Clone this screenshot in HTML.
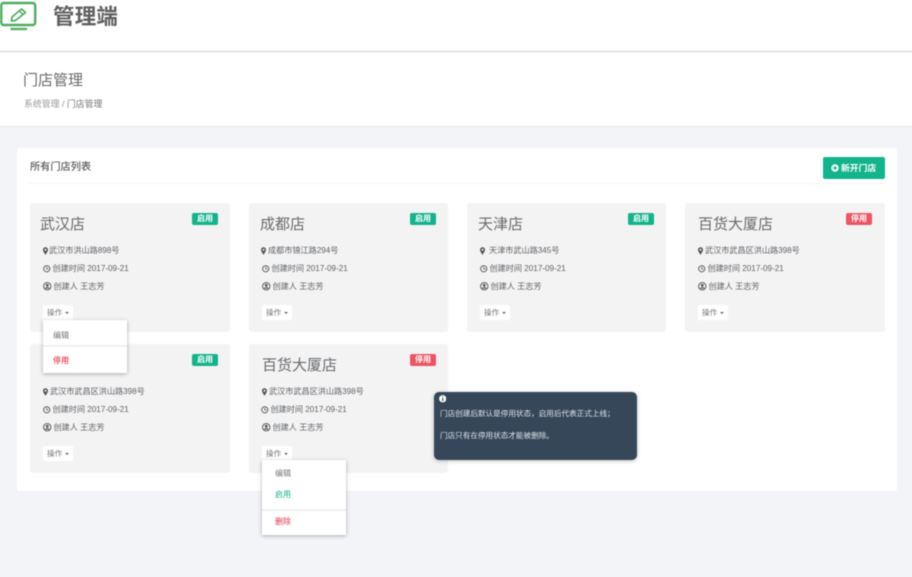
<!DOCTYPE html>
<html lang="zh">
<head>
<meta charset="utf-8">
<title>门店管理</title>
<style>
*{box-sizing:border-box;margin:0;padding:0}
html,body{width:912px;height:577px;overflow:hidden;background:#f3f4f8}
body{font-family:"Liberation Sans","Noto Sans CJK SC",sans-serif;color:#676a6c;position:relative}
#wrap{position:absolute;left:0;top:0;width:912px;height:577px;filter:blur(.45px)}
.a{position:absolute;white-space:nowrap}
.card{position:absolute;width:200px;height:128.5px;background:#f3f3f4;border-radius:3px}
.t{position:absolute;left:10px;top:9.5px;font-size:15px;line-height:24px;color:#676a6c;white-space:nowrap}
.b{position:absolute;top:9.5px;width:26px;height:12px;border-radius:2px;color:#fff;font-size:8px;line-height:12px;text-align:center;font-weight:bold}
.on{background:#13b38b}.off{background:#ed5565}
.r{position:absolute;left:13px;font-size:8.15px;line-height:14px;color:#5f6264;white-space:nowrap;display:flex;align-items:center}
.r svg{flex:none;margin-right:2px}
.btn{position:absolute;left:13px;top:101.5px;width:30px;height:15px;background:#fff;border-radius:2px;font-size:7.6px;line-height:15px;color:#777;padding-left:4px;white-space:nowrap}
.btn i{position:absolute;right:4px;top:7px;border:2.5px solid transparent;border-top:2.5px solid #666;border-bottom:0}
.menu{position:absolute;background:#fff;box-shadow:0 1px 4px rgba(0,0,0,.3);font-size:8px;z-index:3}
.menu div{position:absolute;left:0;white-space:nowrap}
.hr{height:2px;width:100%;background:#f0f0f0}
</style>
</head>
<body>
<div id="wrap">
<div class="a" style="left:-10px;top:-10px;width:932px;height:137px;background:#fff;border-bottom:1px solid #e4e5e8"></div>
<div class="a" style="left:-10px;top:51px;width:932px;height:1px;background:#cfcfcf"></div>

<svg class="a" style="left:0;top:1px" width="38" height="30" viewBox="0 0 38 30" fill="none" stroke="#4cae5e">
<rect x="1.2" y="2" width="34" height="22" rx="2.5" stroke-width="2.4"/>
<path d="M11.5 20 L12 16 L21.5 8 L25.5 11.5 L15.5 19.5 Z" stroke-width="1.7" stroke-linejoin="round"/>
<path d="M19.5 10 L23 13.5" stroke-width="1.3"/>
<path d="M10.5 28 H27" stroke-width="2.2"/>
</svg>
<div class="a" style="left:53px;top:2px;font-size:21.5px;line-height:30px;font-weight:bold;color:#606060;letter-spacing:.2px">管理端</div>

<div class="a" style="left:23px;top:71px;font-size:15px;line-height:20px;color:#676a6c">门店管理</div>
<div class="a" style="left:24px;top:97px;font-size:8.9px;line-height:14px;color:#777"><span style="color:#999">系统管理 /</span> 门店管理</div>

<div class="a" style="left:17px;top:148px;width:880px;height:343px;background:#fff;border-radius:2px;box-shadow:0 0 1px rgba(0,0,0,.05)"></div>
<div class="a" style="left:30px;top:160px;font-size:10.2px;line-height:16px;color:#5a5a5a;font-weight:500">所有门店列表</div>
<div class="a" style="left:30px;top:183px;width:855px;border-top:1px dotted #e8e8e8"></div>
<div class="a" style="left:823px;top:157px;width:62px;height:22px;background:#13b38b;border-radius:2px;color:#fff;font-size:8.8px;line-height:22px;font-weight:bold;padding-left:18px">新开门店</div>
<svg class="a" style="left:831px;top:164px" width="8" height="8" viewBox="0 0 8 8"><circle cx="4" cy="4" r="3.7" fill="#fff"/><path d="M4 2V6M2 4H6" stroke="#13b38b" stroke-width="1.2"/></svg>

<!-- Card 1 -->
<div class="card" style="left:30px;top:203px">
<div class="t">武汉店</div><div class="b on" style="left:162px">启用</div>
<div class="r" style="top:41px"><svg width="5" height="8" viewBox="0 0 6 9" style="margin-right:1px"><path fill-rule="evenodd" fill="#555" d="M3 0a3 3 0 0 1 3 3c0 2-3 6-3 6S0 5 0 3a3 3 0 0 1 3-3zm0 1.8a1.2 1.2 0 1 0 0 2.4 1.2 1.2 0 0 0 0-2.4z"/></svg><span>武汉市洪山路898号</span></div>
<div class="r" style="top:59px"><svg width="7.5" height="7.5" viewBox="0 0 8 8" fill="none" stroke="#555"><circle cx="4" cy="4" r="3.3"/><path d="M4 2V4.2H5.8" stroke-width=".8"/></svg><span>创建时间 2017-09-21</span></div>
<div class="r" style="top:76.5px"><svg width="8.5" height="8.5" viewBox="0 0 9 9"><circle cx="4.5" cy="4.5" r="3.9" fill="none" stroke="#555"/><circle cx="4.5" cy="3.5" r="1.5" fill="#555"/><path d="M2 7a2.6 2.2 0 0 1 5 0z" fill="#555"/></svg><span>创建人 王志芳</span></div>
<div class="btn">操作<i></i></div>
</div>

<!-- Card 2 -->
<div class="card" style="left:249px;top:203px;width:199px">
<div class="t" style="left:11px">成都店</div><div class="b on" style="left:161px">启用</div>
<div class="r" style="top:41px;left:12px"><svg width="5" height="8" viewBox="0 0 6 9"><path fill-rule="evenodd" fill="#555" d="M3 0a3 3 0 0 1 3 3c0 2-3 6-3 6S0 5 0 3a3 3 0 0 1 3-3zm0 1.8a1.2 1.2 0 1 0 0 2.4 1.2 1.2 0 0 0 0-2.4z"/></svg><span>成都市锦江路294号</span></div>
<div class="r" style="top:59px"><svg width="7.5" height="7.5" viewBox="0 0 8 8" fill="none" stroke="#555"><circle cx="4" cy="4" r="3.3"/><path d="M4 2V4.2H5.8" stroke-width=".8"/></svg><span>创建时间 2017-09-21</span></div>
<div class="r" style="top:76.5px"><svg width="8.5" height="8.5" viewBox="0 0 9 9"><circle cx="4.5" cy="4.5" r="3.9" fill="none" stroke="#555"/><circle cx="4.5" cy="3.5" r="1.5" fill="#555"/><path d="M2 7a2.6 2.2 0 0 1 5 0z" fill="#555"/></svg><span>创建人 王志芳</span></div>
<div class="btn">操作<i></i></div>
</div>

<!-- Card 3 -->
<div class="card" style="left:467px;top:203px;width:199px">
<div class="t" style="left:11px">天津店</div><div class="b on" style="left:161px">启用</div>
<div class="r" style="top:41px"><svg width="5" height="8" viewBox="0 0 6 9" style="margin-right:4px"><path fill-rule="evenodd" fill="#555" d="M3 0a3 3 0 0 1 3 3c0 2-3 6-3 6S0 5 0 3a3 3 0 0 1 3-3zm0 1.8a1.2 1.2 0 1 0 0 2.4 1.2 1.2 0 0 0 0-2.4z"/></svg><span>天津市武山路345号</span></div>
<div class="r" style="top:59px"><svg width="7.5" height="7.5" viewBox="0 0 8 8" fill="none" stroke="#555"><circle cx="4" cy="4" r="3.3"/><path d="M4 2V4.2H5.8" stroke-width=".8"/></svg><span>创建时间 2017-09-21</span></div>
<div class="r" style="top:76.5px"><svg width="8.5" height="8.5" viewBox="0 0 9 9"><circle cx="4.5" cy="4.5" r="3.9" fill="none" stroke="#555"/><circle cx="4.5" cy="3.5" r="1.5" fill="#555"/><path d="M2 7a2.6 2.2 0 0 1 5 0z" fill="#555"/></svg><span>创建人 王志芳</span></div>
<div class="btn">操作<i></i></div>
</div>

<!-- Card 4 -->
<div class="card" style="left:685px;top:203px">
<div class="t" style="left:13px">百货大厦店</div><div class="b off" style="left:161px">停用</div>
<div class="r" style="top:41px"><svg width="5" height="8" viewBox="0 0 6 9"><path fill-rule="evenodd" fill="#555" d="M3 0a3 3 0 0 1 3 3c0 2-3 6-3 6S0 5 0 3a3 3 0 0 1 3-3zm0 1.8a1.2 1.2 0 1 0 0 2.4 1.2 1.2 0 0 0 0-2.4z"/></svg><span>武汉市武昌区洪山路398号</span></div>
<div class="r" style="top:59px"><svg width="7.5" height="7.5" viewBox="0 0 8 8" fill="none" stroke="#555"><circle cx="4" cy="4" r="3.3"/><path d="M4 2V4.2H5.8" stroke-width=".8"/></svg><span>创建时间 2017-09-21</span></div>
<div class="r" style="top:76.5px"><svg width="8.5" height="8.5" viewBox="0 0 9 9"><circle cx="4.5" cy="4.5" r="3.9" fill="none" stroke="#555"/><circle cx="4.5" cy="3.5" r="1.5" fill="#555"/><path d="M2 7a2.6 2.2 0 0 1 5 0z" fill="#555"/></svg><span>创建人 王志芳</span></div>
<div class="btn">操作<i></i></div>
</div>

<!-- Card 5 -->
<div class="card" style="left:30px;top:344px">
<div class="b on" style="left:162px">启用</div>
<div class="r" style="top:41px"><svg width="5" height="8" viewBox="0 0 6 9"><path fill-rule="evenodd" fill="#555" d="M3 0a3 3 0 0 1 3 3c0 2-3 6-3 6S0 5 0 3a3 3 0 0 1 3-3zm0 1.8a1.2 1.2 0 1 0 0 2.4 1.2 1.2 0 0 0 0-2.4z"/></svg><span>武汉市武昌区洪山路398号</span></div>
<div class="r" style="top:59px"><svg width="7.5" height="7.5" viewBox="0 0 8 8" fill="none" stroke="#555"><circle cx="4" cy="4" r="3.3"/><path d="M4 2V4.2H5.8" stroke-width=".8"/></svg><span>创建时间 2017-09-21</span></div>
<div class="r" style="top:76.5px"><svg width="8.5" height="8.5" viewBox="0 0 9 9"><circle cx="4.5" cy="4.5" r="3.9" fill="none" stroke="#555"/><circle cx="4.5" cy="3.5" r="1.5" fill="#555"/><path d="M2 7a2.6 2.2 0 0 1 5 0z" fill="#555"/></svg><span>创建人 王志芳</span></div>
<div class="btn">操作<i></i></div>
</div>

<!-- Card 6 -->
<div class="card" style="left:249px;top:344px;width:199px">
<div class="t" style="left:13px">百货大厦店</div><div class="b off" style="left:161px">停用</div>
<div class="r" style="top:41px"><svg width="5" height="8" viewBox="0 0 6 9"><path fill-rule="evenodd" fill="#555" d="M3 0a3 3 0 0 1 3 3c0 2-3 6-3 6S0 5 0 3a3 3 0 0 1 3-3zm0 1.8a1.2 1.2 0 1 0 0 2.4 1.2 1.2 0 0 0 0-2.4z"/></svg><span>武汉市武昌区洪山路398号</span></div>
<div class="r" style="top:59px;left:12px"><svg width="7.5" height="7.5" viewBox="0 0 8 8" fill="none" stroke="#555"><circle cx="4" cy="4" r="3.3"/><path d="M4 2V4.2H5.8" stroke-width=".8"/></svg><span>创建时间 2017-09-21</span></div>
<div class="r" style="top:76.5px"><svg width="8.5" height="8.5" viewBox="0 0 9 9"><circle cx="4.5" cy="4.5" r="3.9" fill="none" stroke="#555"/><circle cx="4.5" cy="3.5" r="1.5" fill="#555"/><path d="M2 7a2.6 2.2 0 0 1 5 0z" fill="#555"/></svg><span>创建人 王志芳</span></div>
<div class="btn">操作<i></i></div>
</div>

<!-- Dropdown 1 -->
<div class="menu" style="left:43px;top:320px;width:84px;height:53px">
<div style="left:10px;top:10px;color:#777;line-height:11px">编辑</div>
<div class="hr" style="top:25px"></div>
<div style="left:10px;top:35px;color:#e83a4e;line-height:11px;font-weight:500">停用</div>
</div>

<!-- Dropdown 2 -->
<div class="menu" style="left:262px;top:460px;width:84px;height:75px">
<div style="left:13px;top:8px;color:#777;line-height:11px">编辑</div>
<div style="left:13px;top:29px;color:#13b38b;line-height:11px">启用</div>
<div class="hr" style="top:49px"></div>
<div style="left:13px;top:56px;color:#e0324a;line-height:11px">删除</div>
</div>

<!-- Tooltip -->
<div class="a" style="left:434px;top:392px;width:203px;height:68px;background:#364759;border-radius:5px;box-shadow:0 1px 4px rgba(0,0,0,.25);z-index:4;color:#dfe3e8;font-size:7.6px">
<svg style="position:absolute;left:4.5px;top:3px" width="7.5" height="7.5" viewBox="0 0 7 7"><circle cx="3.5" cy="3.5" r="3.4" fill="#fff"/><path d="M3.5 1.2V1.9M3.5 2.8V5.6" stroke="#364759" stroke-width="1.1"/></svg>
<div style="position:absolute;left:6px;top:15.5px;line-height:12px;white-space:nowrap">门店创建后默认是停用状态，启用后代表正式上线；</div>
<div style="position:absolute;left:6px;top:37.5px;line-height:12px;white-space:nowrap">门店只有在停用状态才能被删除。</div>
</div>
</div>
</body>
</html>
